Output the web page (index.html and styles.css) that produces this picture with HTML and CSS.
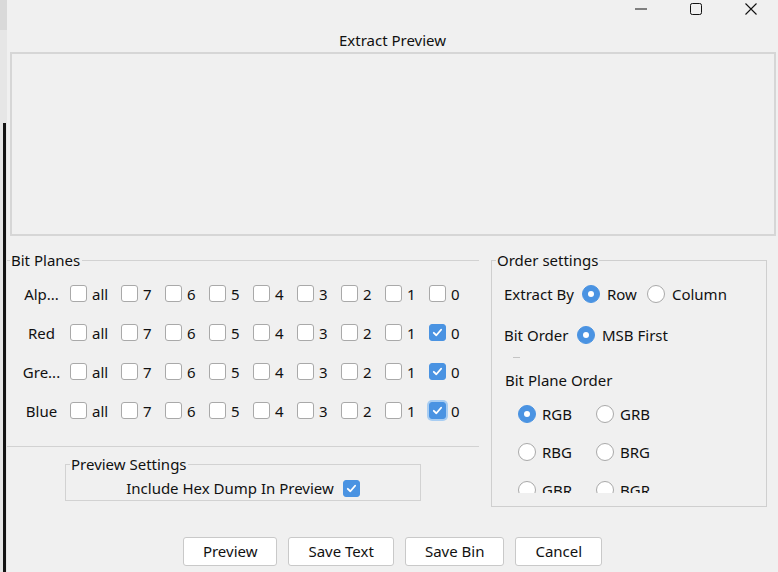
FILE: index.html
```html
<!DOCTYPE html>
<html>
<head>
<meta charset="utf-8">
<title>Extract Preview</title>
<link rel="stylesheet" href="styles.css">
</head>
<body>
<div class="screen">
  <div class="backdrop"></div>
  <div class="window">
    <div class="titlebar">
      <span class="ctl"><svg viewBox="0 0 12 12"><line x1="0" y1="6" x2="12" y2="6" stroke="#111" stroke-width="1"/></svg></span>
      <span class="ctl"><svg viewBox="0 0 12 12"><rect x="0.5" y="0.5" width="11" height="11" rx="1.8" fill="none" stroke="#111" stroke-width="1"/></svg></span>
      <span class="ctl"><svg viewBox="0 0 12 12"><path d="M0.5 0.5 L11.5 11.5 M11.5 0.5 L0.5 11.5" stroke="#111" stroke-width="1.1" fill="none"/></svg></span>
    </div>
    <div class="caption">Extract Preview</div>
    <div class="preview-area"></div>

    <div class="middle">
      <div class="left-col">
        <fieldset class="bitplanes">
          <legend>Bit Planes</legend>
          <div class="bp-row">
            <span class="bp-label">Alp...</span>
            <span class="cb-item wide"><span class="cb"></span>all</span>
            <span class="cb-item"><span class="cb"></span>7</span>
            <span class="cb-item"><span class="cb"></span>6</span>
            <span class="cb-item"><span class="cb"></span>5</span>
            <span class="cb-item"><span class="cb"></span>4</span>
            <span class="cb-item"><span class="cb"></span>3</span>
            <span class="cb-item"><span class="cb"></span>2</span>
            <span class="cb-item"><span class="cb"></span>1</span>
            <span class="cb-item"><span class="cb"></span>0</span>
          </div>
          <div class="bp-row">
            <span class="bp-label">Red</span>
            <span class="cb-item wide"><span class="cb"></span>all</span>
            <span class="cb-item"><span class="cb"></span>7</span>
            <span class="cb-item"><span class="cb"></span>6</span>
            <span class="cb-item"><span class="cb"></span>5</span>
            <span class="cb-item"><span class="cb"></span>4</span>
            <span class="cb-item"><span class="cb"></span>3</span>
            <span class="cb-item"><span class="cb"></span>2</span>
            <span class="cb-item"><span class="cb"></span>1</span>
            <span class="cb-item"><span class="cb checked"><svg viewBox="0 0 17 17"><path d="M4.3 8.9 L7.2 11.6 L12.6 5.4" stroke="#fff" stroke-width="2.1" fill="none" stroke-linecap="round" stroke-linejoin="round"/></svg></span>0</span>
          </div>
          <div class="bp-row">
            <span class="bp-label">Gre...</span>
            <span class="cb-item wide"><span class="cb"></span>all</span>
            <span class="cb-item"><span class="cb"></span>7</span>
            <span class="cb-item"><span class="cb"></span>6</span>
            <span class="cb-item"><span class="cb"></span>5</span>
            <span class="cb-item"><span class="cb"></span>4</span>
            <span class="cb-item"><span class="cb"></span>3</span>
            <span class="cb-item"><span class="cb"></span>2</span>
            <span class="cb-item"><span class="cb"></span>1</span>
            <span class="cb-item"><span class="cb checked"><svg viewBox="0 0 17 17"><path d="M4.3 8.9 L7.2 11.6 L12.6 5.4" stroke="#fff" stroke-width="2.1" fill="none" stroke-linecap="round" stroke-linejoin="round"/></svg></span>0</span>
          </div>
          <div class="bp-row">
            <span class="bp-label">Blue</span>
            <span class="cb-item wide"><span class="cb"></span>all</span>
            <span class="cb-item"><span class="cb"></span>7</span>
            <span class="cb-item"><span class="cb"></span>6</span>
            <span class="cb-item"><span class="cb"></span>5</span>
            <span class="cb-item"><span class="cb"></span>4</span>
            <span class="cb-item"><span class="cb"></span>3</span>
            <span class="cb-item"><span class="cb"></span>2</span>
            <span class="cb-item"><span class="cb"></span>1</span>
            <span class="cb-item"><span class="cb checked focus"><svg viewBox="0 0 17 17"><path d="M4.3 8.9 L7.2 11.6 L12.6 5.4" stroke="#fff" stroke-width="2.1" fill="none" stroke-linecap="round" stroke-linejoin="round"/></svg></span>0</span>
          </div>
        </fieldset>

        <fieldset class="prevset">
          <legend>Preview Settings</legend>
          <div class="prev-row">
            <span>Include Hex Dump In Preview</span>
            <span class="cb checked"><svg viewBox="0 0 17 17"><path d="M4.3 8.9 L7.2 11.6 L12.6 5.4" stroke="#fff" stroke-width="2.1" fill="none" stroke-linecap="round" stroke-linejoin="round"/></svg></span>
          </div>
        </fieldset>
      </div>

      <fieldset class="order">
        <legend>Order settings</legend>
        <div class="ord-row">
          <span class="lbl lbl-extract">Extract By</span>
          <span class="radio-item"><span class="rd on"></span>Row</span>
          <span class="radio-item"><span class="rd"></span>Column</span>
        </div>
        <div class="ord-row row-bitorder">
          <span class="lbl lbl-bitorder">Bit Order</span>
          <span class="radio-item"><span class="rd on"></span>MSB First</span>
        </div>
        <div class="tick"></div>
        <div class="bpo-title">Bit Plane Order</div>
        <div class="bpo-clip">
          <div class="bpo-grid">
            <span class="radio-item"><span class="rd on"></span>RGB</span>
            <span class="radio-item"><span class="rd"></span>GRB</span>
            <span class="radio-item"><span class="rd"></span>RBG</span>
            <span class="radio-item"><span class="rd"></span>BRG</span>
            <span class="radio-item"><span class="rd"></span>GBR</span>
            <span class="radio-item"><span class="rd"></span>BGR</span>
          </div>
        </div>
      </fieldset>
    </div>

    <div class="buttons">
      <button class="btn">Preview</button>
      <button class="btn">Save Text</button>
      <button class="btn">Save Bin</button>
      <button class="btn">Cancel</button>
    </div>
  </div>
</div>
</body>
</html>
```

FILE: styles.css
```css
* { box-sizing: border-box; }
html, body { margin: 0; padding: 0; }
body {
  width: 778px;
  height: 572px;
  overflow: hidden;
  background: #f0f0f0;
  font-family: "Noto Sans", "Open Sans", sans-serif;
  font-size: 15px;
  color: #111;
}
.screen { display: flex; height: 572px; }
.backdrop {
  width: 7px;
  flex: none;
  background:
    linear-gradient(to right, transparent 3px, #141414 3px, #141414 6px, transparent 6px) 0 123px / 7px 100% no-repeat,
    linear-gradient(#d9d9d9 0 30px, #e6e6e6 30px);
}
.window { flex: 1; display: flex; flex-direction: column; background: #f0f0f0; }

.titlebar { height: 30px; display: flex; justify-content: flex-end; padding-top: 3px; }
.ctl { width: 55px; height: 12px; display: flex; justify-content: center; }
.ctl svg { width: 12px; height: 12px; display: block; }

.caption { height: 20px; line-height: 20px; text-align: center; }
.preview-area {
  margin: 2px 2px 0 3px;
  height: 184px;
  border: 2px solid #d6d6d6;
  background: #f0f0f0;
}

.middle { margin-top: 14px; display: flex; gap: 12px; }
.left-col { width: 472px; }

fieldset { margin: 0; padding: 0; min-width: 0; }
legend { padding: 0 1px; line-height: 20px; }

.bitplanes {
  border: none;
  border-top: 1px solid #d2d2d2;
  border-bottom: 1px solid #d2d2d2;
  padding: 4px 0 16px;
}
.bitplanes legend { margin-left: 3px; padding: 0 2px 0 1px; }
.bp-row { height: 39px; display: flex; align-items: center; padding-left: 11px; }
.bp-label { width: 47px; text-align: center; margin-right: 5px; }
.cb-item { display: flex; align-items: center; width: 44px; gap: 5px; }
.cb-item.wide { width: 51px; }
.cb {
  width: 17px;
  height: 17px;
  border: 1px solid #a9a9a9;
  border-radius: 3px;
  background: #fff;
  flex: none;
}
.cb svg { display: block; width: 15px; height: 15px; }
.cb.checked { background: #4a93e2; border-color: #4a93e2; }
.cb.focus { box-shadow: 0 0 0 2px #a8cdf2; }

.prevset {
  margin: 7px 0 0 58px;
  width: 356px;
  border: 1px solid #d2d2d2;
  padding: 4px 0 2px;
}
.prevset legend { margin-left: 4px; }
.prev-row { height: 20px; display: flex; justify-content: center; align-items: center; gap: 9px; }

.order {
  width: 276px;
  border: 1px solid #cfcfcf;
  padding: 12px 0 13px 12px;
}
.order legend { margin-left: -8px; }
.ord-row { height: 24px; display: flex; align-items: center; }
.row-bitorder { margin-top: 17px; }
.lbl-extract { width: 78px; }
.lbl-bitorder { width: 73px; }
.radio-item { display: flex; align-items: center; gap: 7px; margin-right: 10px; }
.rd {
  width: 18px;
  height: 18px;
  border-radius: 50%;
  border: 1px solid #a9a9a9;
  background: #fff;
  flex: none;
}
.rd.on {
  background: #4a93e2;
  border-color: #4a93e2;
  display: flex;
  align-items: center;
  justify-content: center;
}
.rd.on::after {
  content: "";
  width: 6px;
  height: 6px;
  border-radius: 50%;
  background: #fff;
}
.tick { margin: 10px 0 0 9px; width: 7px; height: 1px; background: #c4c4c4; }
.bpo-title { margin-top: 12px; line-height: 20px; padding-left: 1px; }
.bpo-clip { margin-top: 5px; height: 98px; overflow: hidden; }
.bpo-grid {
  display: grid;
  grid-template-columns: 78px 78px;
  grid-auto-rows: 38px;
  padding-left: 14px;
}
.bpo-grid .radio-item { gap: 6px; margin-right: 0; }

.buttons { margin-top: 30px; display: flex; justify-content: center; gap: 11px; }
.btn {
  height: 29px;
  padding: 0 19px;
  background: #fff;
  border: 1px solid #c9c9c9;
  border-radius: 3px;
  font: inherit;
  color: #111;
  line-height: 27px;
}
```
